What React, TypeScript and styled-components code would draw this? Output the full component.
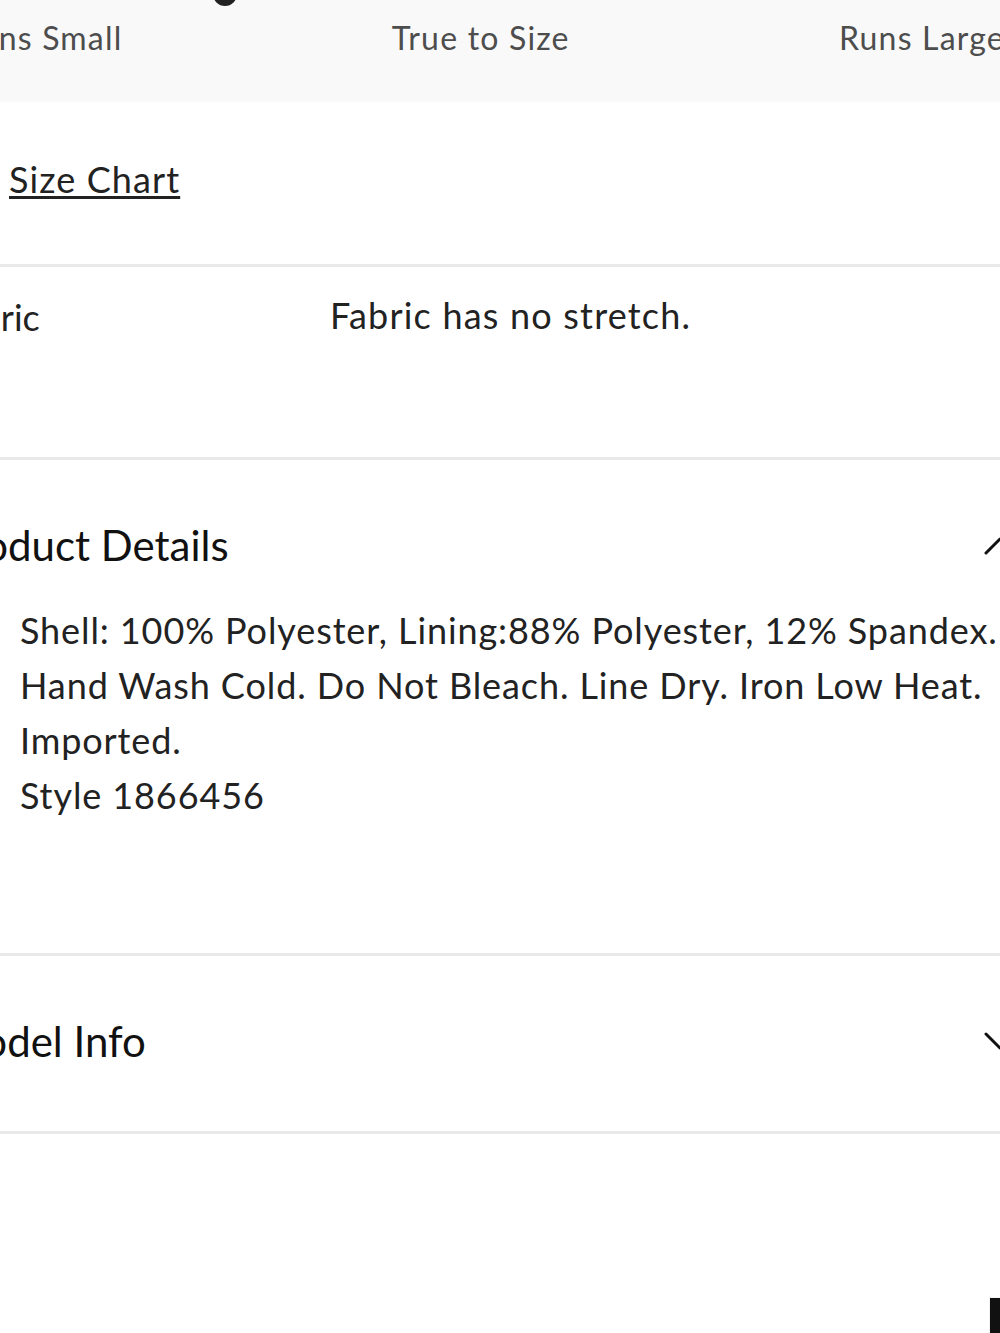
import React from "react";
import styled, { createGlobalStyle } from "styled-components";

const GlobalStyle = createGlobalStyle`
  html, body {
    margin: 0;
    padding: 0;
    background: #ffffff;
    overflow: hidden;
  }
  body {
    font-family: "Lato", "Liberation Sans", sans-serif;
    color: #222;
    -webkit-font-smoothing: antialiased;
  }
`;

const Page = styled.div`
  position: relative;
  width: 1090px;
  margin-left: -55px;
  min-height: 1333px;
`;

const FitBar = styled.div`
  position: relative;
  height: 102px;
  background: #f9f9f9;
  box-sizing: border-box;
  padding: 19px 30px 0 14px;
`;

const Knob = styled.span`
  position: absolute;
  left: 268px;
  top: -18px;
  width: 24px;
  height: 24px;
  border-radius: 50%;
  background: #222;
`;

const FitLabels = styled.div`
  display: flex;
  justify-content: space-between;
`;

const FitLabel = styled.span`
  font-size: 32px;
  line-height: 1.2;
  letter-spacing: 1.2px;
  color: #4d4d4d;
  white-space: nowrap;
`;

const SizeChartRow = styled.div`
  padding: 56px 0 63px 64px;
`;

const SizeChartLink = styled.a`
  font-size: 36px;
  line-height: 1.2;
  letter-spacing: 1.1px;
  color: #222;
  text-decoration: underline;
  text-decoration-thickness: 3px;
  text-underline-offset: 3px;
  cursor: pointer;
`;

const Divider = styled.hr`
  margin: 0;
  border: none;
  height: 3px;
  background: #e9e9e9;
`;

const StretchRow = styled.div`
  display: grid;
  grid-template-columns: 385px 1fr;
  padding: 27px 0 118px 0;
`;

const StretchLabel = styled.span`
  font-size: 36px;
  line-height: 1.2;
  color: #222;
  padding-top: 2px;
`;

const StretchValue = styled.span`
  font-size: 36px;
  line-height: 1.2;
  letter-spacing: 1.2px;
  color: #222;
`;

const Section = styled.section<{ $bottom: number }>`
  padding: 60px 0 ${(p) => p.$bottom}px 0;
`;

const SectionHeader = styled.div`
  display: flex;
  align-items: center;
  justify-content: space-between;
  padding-right: 19px;
`;

const SectionTitle = styled.h2`
  margin: 0;
  font-size: 42px;
  line-height: 1.2;
  font-weight: 400;
  color: #111;
`;

const Chevron = styled.svg`
  width: 32px;
  height: 18px;
  flex: none;
`;

const DetailsBody = styled.div`
  margin-top: 32px;
  padding-left: 75px;
`;

const DetailLine = styled.p`
  margin: 0;
  font-size: 36px;
  line-height: 55px;
  letter-spacing: 0.9px;
  color: #222;
  white-space: nowrap;
`;

const ChatButton = styled.div`
  position: fixed;
  left: 990px;
  top: 1298px;
  width: 44px;
  height: 44px;
  background: #111;
  box-shadow: 0 0 0 1px #f2f2f2;
`;

const ChevronIcon = ({ up }: { up: boolean }) => (
  <Chevron viewBox="0 0 32 18" fill="none">
    <polyline
      points={up ? "2,16 16,2 30,16" : "2,2 16,16 30,2"}
      stroke="#111"
      strokeWidth="3"
      strokeLinecap="round"
      strokeLinejoin="round"
    />
  </Chevron>
);

export default function App() {
  return (
    <>
      <GlobalStyle />
      <Page>
        <FitBar>
          <Knob />
          <FitLabels>
            <FitLabel>Runs Small</FitLabel>
            <FitLabel>True to Size</FitLabel>
            <FitLabel>Runs Large</FitLabel>
          </FitLabels>
        </FitBar>

        <SizeChartRow>
          <SizeChartLink>Size Chart</SizeChartLink>
        </SizeChartRow>

        <Divider />

        <StretchRow>
          <StretchLabel>Fabric</StretchLabel>
          <StretchValue>Fabric has no stretch.</StretchValue>
        </StretchRow>

        <Divider />

        <Section $bottom={130}>
          <SectionHeader>
            <SectionTitle>Product Details</SectionTitle>
            <ChevronIcon up />
          </SectionHeader>
          <DetailsBody>
            <DetailLine>Shell: 100% Polyester, Lining:88% Polyester, 12% Spandex.</DetailLine>
            <DetailLine>Hand Wash Cold. Do Not Bleach. Line Dry. Iron Low Heat.</DetailLine>
            <DetailLine>Imported.</DetailLine>
            <DetailLine>Style 1866456</DetailLine>
          </DetailsBody>
        </Section>

        <Divider />

        <Section $bottom={65}>
          <SectionHeader>
            <SectionTitle>Model Info</SectionTitle>
            <ChevronIcon up={false} />
          </SectionHeader>
        </Section>

        <Divider />
      </Page>
      <ChatButton />
    </>
  );
}
